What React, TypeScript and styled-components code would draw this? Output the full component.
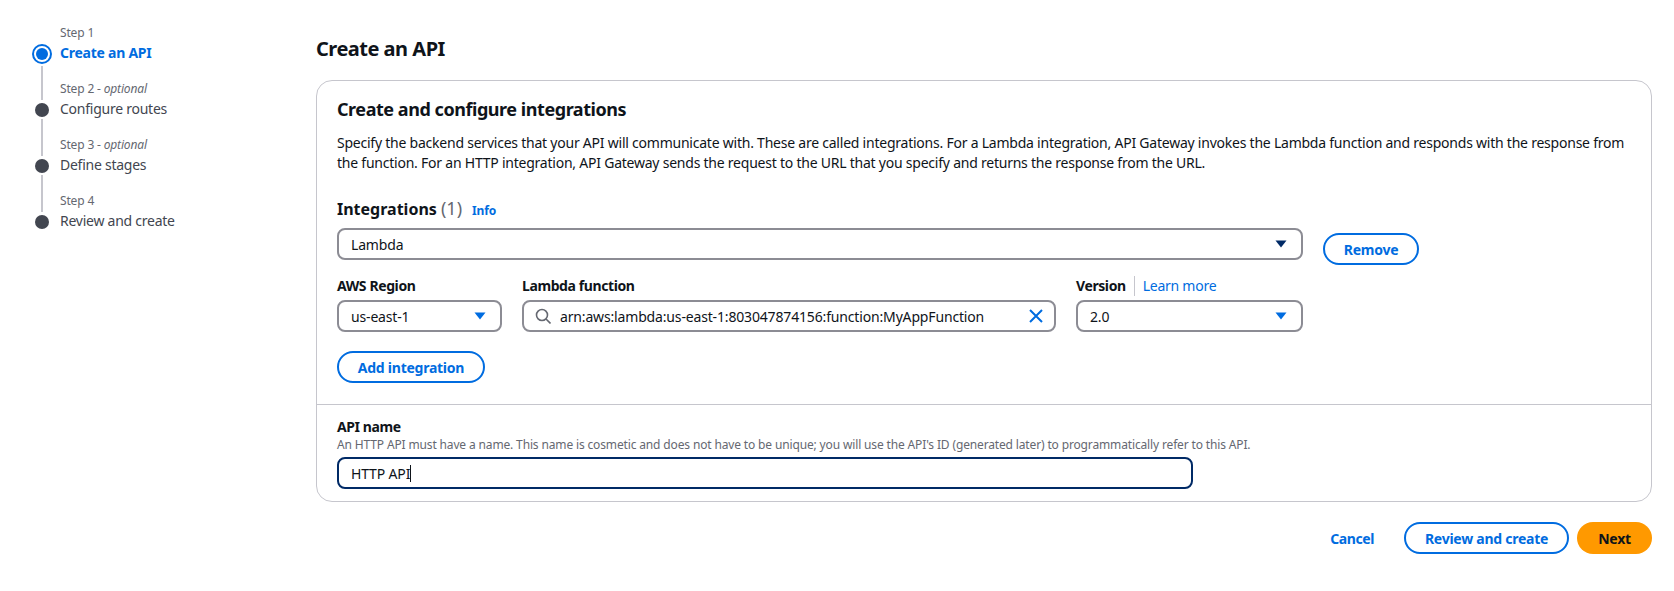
import { createGlobalStyle, styled } from "styled-components";

const GlobalStyle = createGlobalStyle`
  html, body {
    margin: 0;
    padding: 0;
    background: #fff;
    font-family: "Noto Sans", "Open Sans", sans-serif;
    color: #0f141a;
    letter-spacing: -0.16px;
  }
`;

const Page = styled.div`
  display: flex;
  width: 1674px;
  height: 591px;
  overflow: hidden;
`;

const Sidebar = styled.nav`
  width: 316px;
  flex: none;
  padding: 24px 0 0 32px;
  box-sizing: border-box;
`;

const Step = styled.div`
  display: grid;
  grid-template-columns: 20px 1fr;
  grid-template-rows: 19px 20px;
  column-gap: 8px;
  height: 56px;
`;

const Rail = styled.div`
  grid-row: 1 / span 2;
  height: 56px;
  display: flex;
  flex-direction: column;
  align-items: center;
`;

const TopLine = styled.div<{ $first?: boolean }>`
  width: 2px;
  height: 20px;
  margin-bottom: ${(p) => (p.$first ? "0" : "3px")};
  background: ${(p) => (p.$first ? "transparent" : "#c6c6cd")};
  flex: none;
`;

const BottomLine = styled.div<{ $hide?: boolean }>`
  width: 2px;
  flex: 1;
  margin-top: 2px;
  background: ${(p) => (p.$hide ? "transparent" : "#c6c6cd")};
`;

const ActiveDot = styled.div`
  width: 20px;
  height: 20px;
  box-sizing: border-box;
  border: 2px solid #006ce0;
  border-radius: 50%;
  display: flex;
  align-items: center;
  justify-content: center;
  flex: none;
  &::after {
    content: "";
    width: 12px;
    height: 12px;
    border-radius: 50%;
    background: #006ce0;
  }
`;

const Dot = styled.div`
  width: 14px;
  height: 14px;
  border-radius: 50%;
  background: #424650;
  flex: none;
`;

const StepNumber = styled.div`
  font-size: 12px;
  line-height: 18px;
  color: #656871;
  em {
    font-style: italic;
  }
`;

const StepTitle = styled.div<{ $active?: boolean }>`
  font-size: 14px;
  line-height: 20px;
  letter-spacing: -0.25px;
  color: ${(p) => (p.$active ? "#006ce0" : "#424650")};
  font-weight: ${(p) => (p.$active ? 700 : 400)};
`;

const Main = styled.main`
  flex: 1;
  padding: 36px 22px 0 0;
  min-width: 0;
`;

const PageTitle = styled.h1`
  margin: 0 0 18px;
  font-size: 20px;
  line-height: 26px;
  font-weight: 700;
  letter-spacing: -0.5px;
`;

const Panel = styled.section`
  border: 1px solid #c6c6cd;
  border-radius: 16px;
`;

const PanelTop = styled.div`
  padding: 16px 20px 21px;
  border-bottom: 1px solid #c6c6cd;
`;

const PanelTitle = styled.h2`
  margin: 0 0 12px;
  font-size: 18px;
  line-height: 24px;
  font-weight: 700;
  letter-spacing: -0.45px;
`;

const Description = styled.p`
  margin: 0 0 23px;
  font-size: 14px;
  line-height: 20px;
  letter-spacing: -0.23px;
`;

const SectionHead = styled.div`
  display: flex;
  align-items: baseline;
  gap: 10px;
  line-height: 24px;
  margin-bottom: 5px;
`;

const SectionTitle = styled.h3`
  margin: 0;
  font-size: 16px;
  font-weight: 700;
  letter-spacing: 0;
  span {
    font-size: 18px;
    font-weight: 400;
    color: #656871;
  }
`;

const InfoLink = styled.a`
  font-size: 12px;
  font-weight: 700;
  color: #006ce0;
`;

const Row = styled.div`
  display: flex;
  align-items: flex-start;
  gap: 20px;
`;

const Control = styled.div<{ $width: number }>`
  width: ${(p) => p.$width}px;
  height: 32px;
  box-sizing: border-box;
  border: 2px solid #8c8c94;
  border-radius: 8px;
  padding: 0 12px;
  display: flex;
  align-items: center;
  justify-content: space-between;
  font-size: 14px;
  flex: none;
`;

const Caret = styled.svg`
  width: 12px;
  height: 8px;
  margin-right: 2px;
  flex: none;
`;

const SearchIcon = styled.svg`
  width: 16px;
  height: 16px;
  margin-left: -1px;
  flex: none;
`;

const ClearIcon = styled.svg`
  width: 14px;
  height: 14px;
  margin-right: -1px;
  flex: none;
`;

const FieldRow = styled.div`
  display: flex;
  gap: 20px;
  margin-top: 11px;
`;

const Field = styled.div`
  display: flex;
  flex-direction: column;
`;

const Label = styled.label`
  display: block;
  font-size: 14px;
  line-height: 20px;
  font-weight: 700;
  letter-spacing: -0.4px;
`;

const LabelRow = styled.div`
  display: flex;
  align-items: center;
  height: 20px;
  margin-bottom: 4px;
`;

const LearnMore = styled.a`
  margin-left: 8px;
  padding-left: 8px;
  border-left: 1px solid #c6c6cd;
  font-size: 14px;
  line-height: 20px;
  letter-spacing: -0.25px;
  color: #006ce0;
`;

const SearchText = styled.span`
  flex: 1;
  margin-left: 9px;
  white-space: nowrap;
`;

const Button = styled.button<{ $width: number; $primary?: boolean; $nudge?: number }>`
  width: ${(p) => p.$width}px;
  height: 32px;
  box-sizing: border-box;
  flex: none;
  padding: 0;
  margin-top: ${(p) => p.$nudge ?? 0}px;
  border-radius: 20px;
  border: ${(p) => (p.$primary ? "none" : "2px solid #006ce0")};
  background: ${(p) => (p.$primary ? "#ff9900" : "#fff")};
  color: ${(p) => (p.$primary ? "#0f141a" : "#006ce0")};
  font: 700 14px "Noto Sans", "Open Sans", sans-serif;
  letter-spacing: -0.25px;
`;

const AddRow = styled.div`
  margin-top: 19px;
  display: flex;
`;

const PanelBottom = styled.div`
  padding: 12px 20px 12px;
`;

const Hint = styled.div`
  font-size: 12px;
  line-height: 16px;
  letter-spacing: -0.145px;
  color: #656871;
  margin-bottom: 4px;
`;

const NameInput = styled.div`
  width: 856px;
  height: 32px;
  box-sizing: border-box;
  border: 2px solid #002a66;
  border-radius: 8px;
  padding: 0 12px;
  display: flex;
  align-items: center;
  font-size: 14px;
`;

const Cursor = styled.span`
  width: 1px;
  height: 17px;
  background: #0f141a;
  flex: none;
`;

const Footer = styled.div`
  display: flex;
  justify-content: flex-end;
  align-items: center;
  gap: 8px;
  margin-top: 20px;
`;

const TextButton = styled.a`
  font-size: 14px;
  font-weight: 700;
  letter-spacing: -0.4px;
  color: #006ce0;
  margin-right: 22px;
`;

const steps = [
  { num: "Step 1", title: "Create an API", active: true },
  { num: "Step 2", optional: true, title: "Configure routes" },
  { num: "Step 3", optional: true, title: "Define stages" },
  { num: "Step 4", title: "Review and create" },
];

function DownCaret({ color }: { color: string }) {
  return (
    <Caret viewBox="0 0 12 8">
      <path d="M0.5 0.5h11L6 7.5z" fill={color} />
    </Caret>
  );
}

export default function App() {
  return (
    <>
      <GlobalStyle />
      <Page>
        <Sidebar>
          {steps.map((s, i) => (
            <Step key={s.num}>
              <Rail>
                <TopLine $first={i === 0} />
                {s.active ? <ActiveDot /> : <Dot />}
                <BottomLine $hide={i === steps.length - 1} />
              </Rail>
              <StepNumber>
                {s.num}
                {s.optional && (
                  <>
                    {" - "}
                    <em>optional</em>
                  </>
                )}
              </StepNumber>
              <StepTitle $active={s.active}>{s.title}</StepTitle>
            </Step>
          ))}
        </Sidebar>
        <Main>
          <PageTitle>Create an API</PageTitle>
          <Panel>
            <PanelTop>
              <PanelTitle>Create and configure integrations</PanelTitle>
              <Description>
                Specify the backend services that your API will communicate with. These are called
                integrations. For a Lambda integration, API Gateway invokes the Lambda function and
                responds with the response from the function. For an HTTP integration, API Gateway
                sends the request to the URL that you specify and returns the response from the URL.
              </Description>
              <SectionHead>
                <SectionTitle>
                  Integrations <span>(1)</span>
                </SectionTitle>
                <InfoLink>Info</InfoLink>
              </SectionHead>
              <Row>
                <Control $width={966}>
                  Lambda
                  <DownCaret color="#002a66" />
                </Control>
                <Button $width={96} $nudge={5}>
                  Remove
                </Button>
              </Row>
              <FieldRow>
                <Field>
                  <LabelRow>
                    <Label>AWS Region</Label>
                  </LabelRow>
                  <Control $width={165}>
                    us-east-1
                    <DownCaret color="#006ce0" />
                  </Control>
                </Field>
                <Field>
                  <LabelRow>
                    <Label>Lambda function</Label>
                  </LabelRow>
                  <Control $width={534}>
                    <SearchIcon viewBox="0 0 16 16" fill="none" stroke="#656871" strokeWidth="1.6">
                      <circle cx="7" cy="7" r="5.5" />
                      <path d="M11 11L15.5 15.5" />
                    </SearchIcon>
                    <SearchText>arn:aws:lambda:us-east-1:803047874156:function:MyAppFunction</SearchText>
                    <ClearIcon viewBox="0 0 14 14" fill="none" stroke="#006ce0" strokeWidth="2">
                      <path d="M1 1l12 12M13 1L1 13" />
                    </ClearIcon>
                  </Control>
                </Field>
                <Field>
                  <LabelRow>
                    <Label>Version</Label>
                    <LearnMore>Learn more</LearnMore>
                  </LabelRow>
                  <Control $width={227}>
                    2.0
                    <DownCaret color="#006ce0" />
                  </Control>
                </Field>
              </FieldRow>
              <AddRow>
                <Button $width={148}>Add integration</Button>
              </AddRow>
            </PanelTop>
            <PanelBottom>
              <Label>API name</Label>
              <Hint>
                An HTTP API must have a name. This name is cosmetic and does not have to be unique;
                you will use the API's ID (generated later) to programmatically refer to this API.
              </Hint>
              <NameInput>
                HTTP API
                <Cursor />
              </NameInput>
            </PanelBottom>
          </Panel>
          <Footer>
            <TextButton>Cancel</TextButton>
            <Button $width={165}>Review and create</Button>
            <Button $width={75} $primary>
              Next
            </Button>
          </Footer>
        </Main>
      </Page>
    </>
  );
}
